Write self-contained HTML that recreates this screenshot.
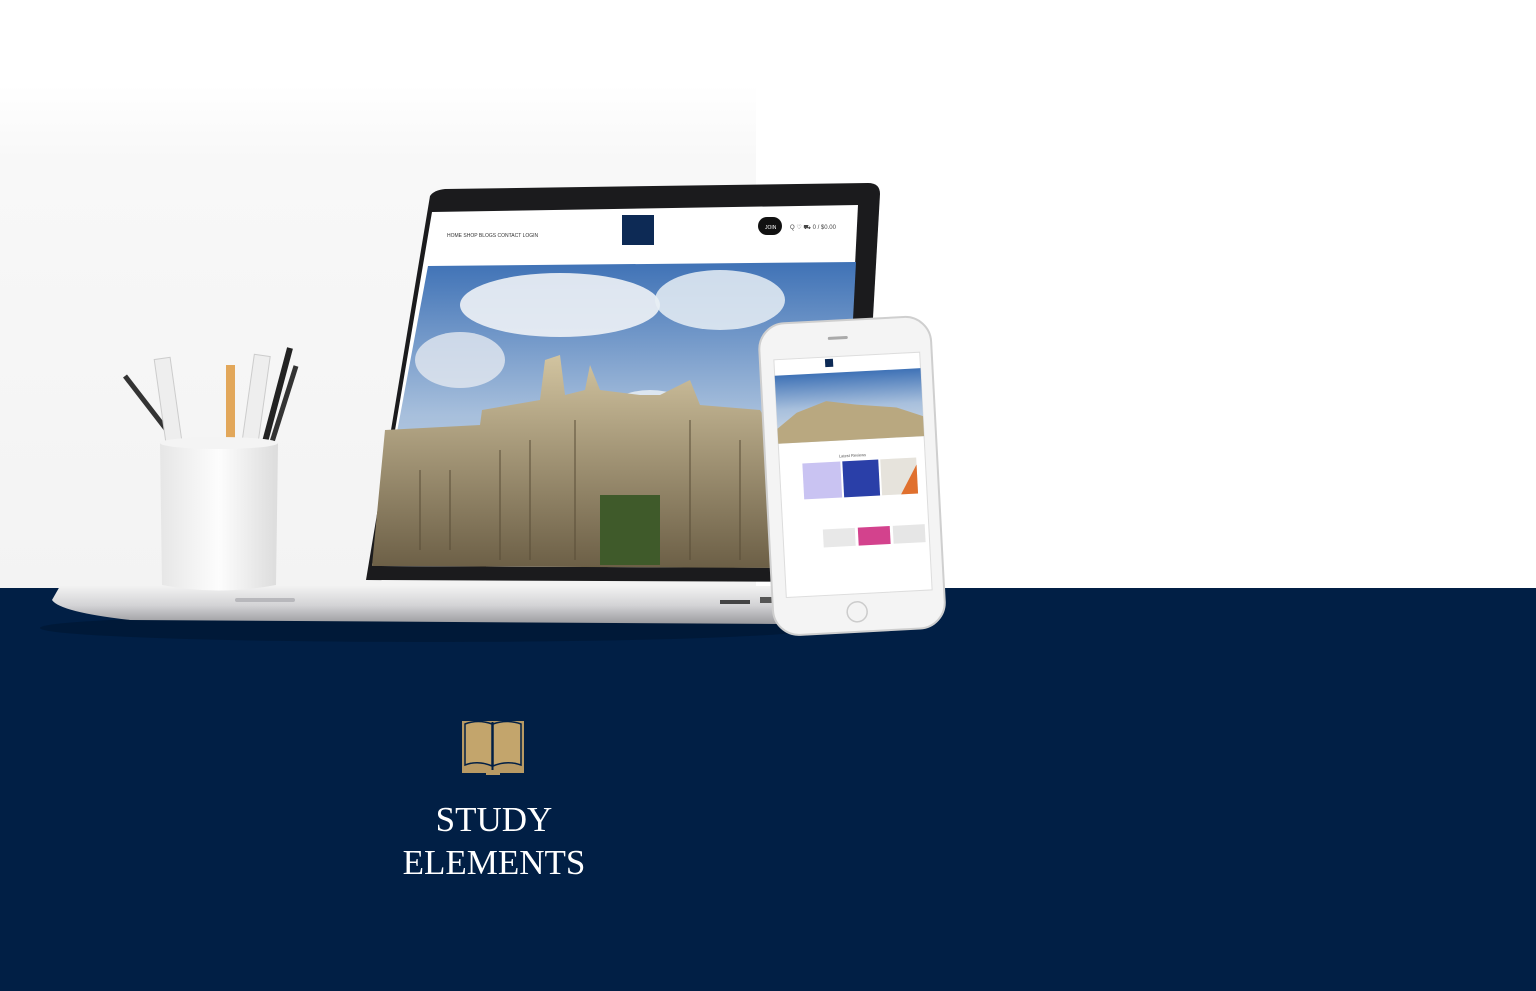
<!DOCTYPE html>
<html><head><style>
html,body{margin:0;padding:0;width:1536px;height:991px;overflow:hidden;background:#fff;font-family:"Liberation Serif",serif}
</style></head><body>
<svg width="1536" height="991" viewBox="0 0 1536 991" xmlns="http://www.w3.org/2000/svg" style="position:absolute;left:0;top:0">
<defs>
<linearGradient id="bgl" x1="0" y1="0" x2="0" y2="1"><stop offset="0" stop-color="#ffffff"/><stop offset="0.15" stop-color="#f8f8f8"/><stop offset="1" stop-color="#f3f3f3"/></linearGradient>
<linearGradient id="sky" x1="0" y1="0" x2="0" y2="1"><stop offset="0" stop-color="#3f72b6"/><stop offset="0.5" stop-color="#a7bfdc"/><stop offset="1" stop-color="#d3dde8"/></linearGradient>
<linearGradient id="bld" x1="0" y1="0" x2="0" y2="1"><stop offset="0" stop-color="#d2c4a0"/><stop offset="1" stop-color="#6c5f46"/></linearGradient>
<linearGradient id="base" x1="0" y1="0" x2="0" y2="1"><stop offset="0" stop-color="#f2f2f2"/><stop offset="0.5" stop-color="#d4d4d6"/><stop offset="1" stop-color="#9a9a9e"/></linearGradient>
<linearGradient id="cup" x1="0" y1="0" x2="1" y2="0"><stop offset="0" stop-color="#e6e6e6"/><stop offset="0.5" stop-color="#fdfdfd"/><stop offset="1" stop-color="#dcdcdc"/></linearGradient>
</defs>
<rect x="0" y="85" width="756" height="503" fill="url(#bgl)"/>
<rect x="0" y="588" width="1536" height="403" fill="#011f45"/>
<ellipse cx="430" cy="628" rx="390" ry="14" fill="#00132c" opacity="0.5"/>
<path d="M430 196 Q434 190 445 189 L868 183 Q880 183 880 194 L858 582 L366 580 Z" fill="#1b1b1d"/>
<path d="M432 212 L858 205 L840 568 L372 566 Z" fill="#fff"/>
<path d="M428 266 L856 262 L840 568 L372 566 Z" fill="url(#sky)"/>
<ellipse cx="560" cy="305" rx="100" ry="32" fill="#eef2f6" opacity="0.9"/>
<ellipse cx="720" cy="300" rx="65" ry="30" fill="#e8eef4" opacity="0.85"/>
<ellipse cx="460" cy="360" rx="45" ry="28" fill="#e3e9f0" opacity="0.8"/>
<ellipse cx="650" cy="410" rx="40" ry="20" fill="#eef2f6" opacity="0.8"/>
<path d="M385 430 L480 425 L482 410 L540 400 L545 360 L560 355 L565 395 L585 390 L590 365 L600 390 L640 395 L660 395 L680 385 L690 380 L700 405 L760 410 L790 460 L790 568 L372 566 Z" fill="url(#bld)"/>
<g stroke="#5a4e38" stroke-width="2" opacity="0.5">
<line x1="420" y1="470" x2="420" y2="550"/><line x1="450" y1="470" x2="450" y2="550"/><line x1="500" y1="450" x2="500" y2="560"/><line x1="530" y1="440" x2="530" y2="560"/><line x1="575" y1="420" x2="575" y2="560"/><line x1="690" y1="420" x2="690" y2="560"/><line x1="740" y1="440" x2="740" y2="560"/>
</g>
<rect x="600" y="495" width="60" height="70" fill="#3f5a2a"/>
<text x="447" y="237" font-family="Liberation Sans" font-size="5" fill="#333">HOME   SHOP   BLOGS   CONTACT   LOGIN</text>
<rect x="622" y="215" width="32" height="30" fill="#0d2a55"/>
<rect x="758" y="217" width="24" height="18" rx="9" fill="#111"/>
<text x="765" y="229" font-family="Liberation Sans" font-size="5" fill="#fff">JOIN</text>
<text x="790" y="229" font-family="Liberation Sans" font-size="6" fill="#444">Q ♡ ⛟ 0 / $0.00</text>
<path d="M60 586 L810 586 L806 610 Q800 624 780 624 L130 620 Q60 612 52 600 Z" fill="url(#base)"/>
<rect x="235" y="598" width="60" height="4" rx="2" fill="#b8b8bc"/>
<rect x="720" y="600" width="30" height="4" fill="#444"/>
<rect x="760" y="597" width="12" height="6" fill="#555"/>
<rect x="782" y="596" width="12" height="6" fill="#555"/>
<line x1="125" y1="376" x2="176" y2="442" stroke="#333" stroke-width="5"/>
<rect x="160" y="358" width="16" height="85" fill="#eee" stroke="#ccc" transform="rotate(-8 168 400)"/>
<rect x="226" y="365" width="9" height="80" fill="#e2a75a"/>
<rect x="248" y="355" width="16" height="90" fill="#eee" stroke="#ccc" transform="rotate(8 256 400)"/>
<line x1="290" y1="348" x2="265" y2="442" stroke="#222" stroke-width="6"/>
<line x1="296" y1="366" x2="272" y2="442" stroke="#333" stroke-width="5"/>
<path d="M160 443 L278 443 L276 585 Q218 596 162 585 Z" fill="url(#cup)"/>
<ellipse cx="219" cy="443" rx="59" ry="6" fill="#f4f4f4"/>
<g transform="rotate(-3 850 475)">
<rect x="766" y="320" width="172" height="312" rx="26" fill="#f4f4f4" stroke="#cfcfcf" stroke-width="2"/>
<rect x="780" y="356" width="146" height="238" fill="#fff" stroke="#ddd"/>
<rect x="780" y="372" width="146" height="68" fill="url(#sky)"/>
<path d="M780 425 L800 410 L830 400 L860 405 L900 410 L926 420 L926 440 L780 440 Z" fill="#b9a880"/>
<rect x="831" y="358" width="8" height="8" fill="#0d2a55"/>
<text x="840" y="457" font-family="Liberation Sans" font-size="4" fill="#555">Latest Reviews</text>
<rect x="803" y="461" width="38" height="36" fill="#c9c3f2"/>
<rect x="843" y="461" width="36" height="36" fill="#2a3fa8"/>
<rect x="881" y="461" width="36" height="36" fill="#e6e3dc"/>
<path d="M900 497 L917 497 L917 468 Z" fill="#e0702e"/>
<rect x="820" y="528" width="32" height="18" fill="#e8e8e8"/>
<rect x="855" y="528" width="32" height="18" fill="#d3428d"/>
<rect x="890" y="528" width="32" height="18" fill="#e6e6e6"/>
<rect x="835" y="336" width="20" height="3" rx="1.5" fill="#aaa"/>
<circle cx="850" cy="612" r="10" fill="none" stroke="#ccc" stroke-width="1.5"/>
</g>
<rect x="462" y="721" width="62" height="52" fill="#b89a64"/>
<path d="M465 724 Q478 719 492 724 L492 766 Q478 760 465 765 Z" fill="#c3a56c" stroke="#011f45" stroke-width="1.5"/>
<path d="M493 724 Q507 719 521 724 L521 765 Q507 760 493 766 Z" fill="#c3a56c" stroke="#011f45" stroke-width="1.5"/>
<line x1="492.5" y1="722" x2="492.5" y2="770" stroke="#011f45" stroke-width="2"/>
<rect x="486" y="772" width="14" height="3" fill="#b89a64"/>
<text x="494" y="831" text-anchor="middle" font-family="Liberation Serif" font-size="35" fill="#fff">STUDY</text>
<text x="494" y="874" text-anchor="middle" font-family="Liberation Serif" font-size="35" fill="#fff">ELEMENTS</text>
</svg>
</body></html>
